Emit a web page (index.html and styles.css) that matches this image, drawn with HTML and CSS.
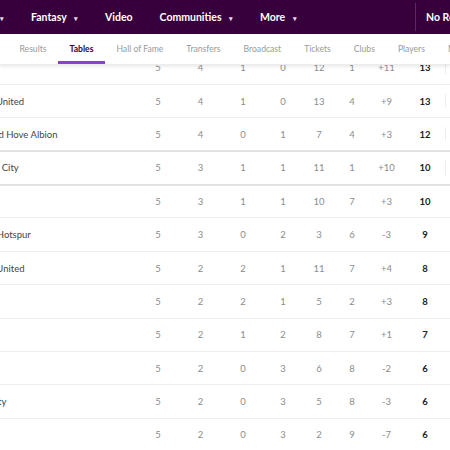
FILE: index.html
```html
<!DOCTYPE html>
<html lang="en">
<head>
    <meta charset="UTF-8" />
    <meta name="viewport" content="width=device-width, initial-scale=1.0" />
    <title>Premier League Table</title>
    <link rel="stylesheet" href="styles.css">
</head>
<body>
    <header class="main-nav">
        <nav class="main-links">
            <span class="nav-item"><span class="caret">▾</span></span>
            <span class="nav-item">Fantasy <span class="caret">▾</span></span>
            <span class="nav-item">Video</span>
            <span class="nav-item">Communities <span class="caret">▾</span></span>
            <span class="nav-item">More <span class="caret">▾</span></span>
        </nav>
        <div class="nav-divider"></div>
        <span class="nav-item nav-campaign">No Room For Racism</span>
    </header>

    <nav class="sub-nav">
        <a class="sub-item">Results</a>
        <a class="sub-item active">Tables</a>
        <a class="sub-item">Hall of Fame</a>
        <a class="sub-item">Transfers</a>
        <a class="sub-item">Broadcast</a>
        <a class="sub-item">Tickets</a>
        <a class="sub-item">Clubs</a>
        <a class="sub-item">Players</a>
        <a class="sub-item">Managers</a>
    </nav>

    <div class="table-wrap">
        <table class="league-table">
            <tbody>
                <tr><td class="team">Arsenal</td><td>5</td><td>4</td><td>1</td><td>0</td><td>12</td><td>1</td><td>+11</td><td class="pts">13</td><td class="form"><span></span></td></tr>
                <tr><td class="team">Newcastle United</td><td>5</td><td>4</td><td>1</td><td>0</td><td>13</td><td>4</td><td>+9</td><td class="pts">13</td><td class="form"><span></span></td></tr>
                <tr class="zone"><td class="team">Brighton and Hove Albion</td><td>5</td><td>4</td><td>0</td><td>1</td><td>7</td><td>4</td><td>+3</td><td class="pts">12</td><td class="form"><span></span></td></tr>
                <tr class="zone"><td class="team">Manchester City</td><td>5</td><td>3</td><td>1</td><td>1</td><td>11</td><td>1</td><td>+10</td><td class="pts">10</td><td class="form"><span></span></td></tr>
                <tr><td class="team">Chelsea</td><td>5</td><td>3</td><td>1</td><td>1</td><td>10</td><td>7</td><td>+3</td><td class="pts">10</td><td class="form"></td></tr>
                <tr><td class="team">Tottenham Hotspur</td><td>5</td><td>3</td><td>0</td><td>2</td><td>3</td><td>6</td><td>-3</td><td class="pts">9</td><td class="form"></td></tr>
                <tr><td class="team">West Ham United</td><td>5</td><td>2</td><td>2</td><td>1</td><td>11</td><td>7</td><td>+4</td><td class="pts">8</td><td class="form"></td></tr>
                <tr><td class="team">Fulham</td><td>5</td><td>2</td><td>2</td><td>1</td><td>5</td><td>2</td><td>+3</td><td class="pts">8</td><td class="form"></td></tr>
                <tr><td class="team">Everton</td><td>5</td><td>2</td><td>1</td><td>2</td><td>8</td><td>7</td><td>+1</td><td class="pts">7</td><td class="form"></td></tr>
                <tr><td class="team">Burnley</td><td>5</td><td>2</td><td>0</td><td>3</td><td>6</td><td>8</td><td>-2</td><td class="pts">6</td><td class="form"></td></tr>
                <tr><td class="team">Leicester City</td><td>5</td><td>2</td><td>0</td><td>3</td><td>5</td><td>8</td><td>-3</td><td class="pts">6</td><td class="form"></td></tr>
                <tr><td class="team">Wolves</td><td>5</td><td>2</td><td>0</td><td>3</td><td>2</td><td>9</td><td>-7</td><td class="pts">6</td><td class="form"></td></tr>
            </tbody>
        </table>
    </div>
</body>
</html>
```

FILE: styles.css
```css
* {
    margin: 0;
    padding: 0;
    box-sizing: border-box;
    font-family: Lato, "Noto Sans", sans-serif;
}

body {
    background-color: #fff;
    width: 450px;
    height: 450px;
    overflow: hidden;
}

.main-nav {
    background-color: #37003c;
    height: 34px;
    display: flex;
    align-items: center;
    white-space: nowrap;
    overflow: hidden;
}

.main-links {
    display: flex;
    align-items: center;
    gap: 27px;
    flex: none;
    width: 415px;
}

.nav-item {
    color: #fff;
    font-weight: 700;
    font-size: 10.5px;
}

.caret {
    font-size: 7px;
    margin-left: 5px;
    color: #e6d9e8;
}

.main-links .nav-item:first-child .caret {
    margin-left: 0;
}

.nav-item:first-child {
    width: 4px;
}

.nav-divider {
    flex: none;
    width: 1px;
    height: 28px;
    background-color: #5b2a60;
}

.nav-campaign {
    margin-left: 10px;
}

.sub-nav {
    height: 31px;
    display: flex;
    align-items: stretch;
    padding-left: 8px;
    white-space: nowrap;
    box-shadow: 0 2px 3px rgba(0, 0, 0, 0.08);
    border-bottom: 1px solid #ececec;
    position: relative;
    z-index: 1;
    background: #fff;
}

.sub-item {
    display: flex;
    align-items: center;
    padding: 3px 11.5px 0;
    font-size: 8.6px;
    color: #9a9a9a;
    border-bottom: 3px solid transparent;
}

.sub-item.active {
    color: #37003c;
    font-weight: 700;
    border-bottom-color: #8a3ee0;
}

.table-wrap {
    overflow: hidden;
}

.league-table {
    margin-top: -14px;
    margin-left: -50px;
    border-collapse: collapse;
    table-layout: fixed;
    width: 560px;
}

.league-table td {
    height: 33.4px;
    font-size: 9.5px;
    color: #8c8c8c;
    text-align: center;
    border-bottom: 1px solid #efefef;
    white-space: nowrap;
}

.league-table td:nth-child(1) { width: 187px; }
.league-table td:nth-child(2) { width: 42px; }
.league-table td:nth-child(3) { width: 43px; }
.league-table td:nth-child(4) { width: 42px; }
.league-table td:nth-child(5) { width: 38px; }
.league-table td:nth-child(6) { width: 34px; }
.league-table td:nth-child(7) { width: 32px; }
.league-table td:nth-child(8) { width: 37px; }
.league-table td:nth-child(9) { width: 40px; }

.league-table .team {
    text-align: left;
    color: #444;
    font-size: 9.5px;
}

.league-table .pts {
    color: #222;
    font-weight: 700;
}

.league-table tr.zone td {
    border-bottom: 2px solid #e2e2e2;
}

.form {
    text-align: left !important;
}

.form span {
    display: block;
    width: 1px;
    height: 14px;
    background-color: #eeeeee;
}
```
